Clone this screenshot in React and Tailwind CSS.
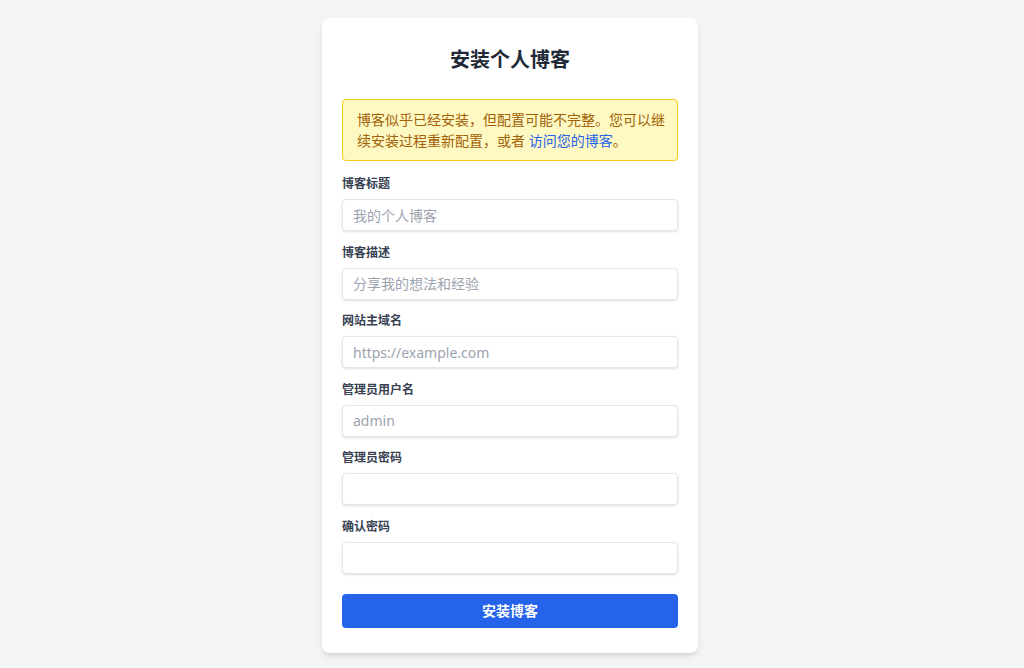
const fields = [
  { label: "博客标题", placeholder: "我的个人博客", type: "text" },
  { label: "博客描述", placeholder: "分享我的想法和经验", type: "text" },
  { label: "网站主域名", placeholder: "https://example.com", type: "text" },
  { label: "管理员用户名", placeholder: "admin", type: "text" },
  { label: "管理员密码", placeholder: "", type: "password" },
  { label: "确认密码", placeholder: "", type: "password" },
];

const App = () => {
  return (
    <div
      className="min-h-screen bg-[#f3f4f6] pt-[18px] pb-4 pr-1 flex justify-center items-start"
      style={{ fontFamily: '"Noto Sans", "Noto Sans CJK SC", sans-serif' }}
    >
      <div className="w-[376px] bg-white rounded-lg shadow-md px-5 pt-7 pb-[25px]">
        <h1 className="text-xl leading-7 font-bold text-[#1f2937] text-center mb-[25px]">
          安装个人博客
        </h1>

        {/* notice */}
        <div className="bg-[#fef9c3] border border-[#facc15] rounded text-sm leading-[21px] text-[#a16207] pl-[14px] pr-2 py-[9px] mb-[15px]">
          博客似乎已经安装，但配置可能不完整。您可以继续安装过程重新配置，或者{" "}
          <a href="#" className="text-[#2563eb]">
            访问您的博客
          </a>
          。
        </div>

        <div className="flex flex-col gap-[13.5px]">
          {fields.map((f) => (
            <div key={f.label}>
              <label className="block text-xs leading-4 font-bold text-[#374151] mb-[7px]">
                {f.label}
              </label>
              <input
                type={f.type}
                placeholder={f.placeholder}
                className="w-full h-8 px-[10px] text-sm text-[#374151] placeholder:text-[#9ca3af] bg-white border border-[#e5e7eb] rounded shadow-sm outline-none"
              />
            </div>
          ))}
        </div>

        <button className="w-full h-[34px] mt-5 bg-[#2563eb] text-white text-sm font-bold rounded hover:bg-[#1d4ed8]">
          安装博客
        </button>
      </div>
    </div>
  );
};

export default App;
